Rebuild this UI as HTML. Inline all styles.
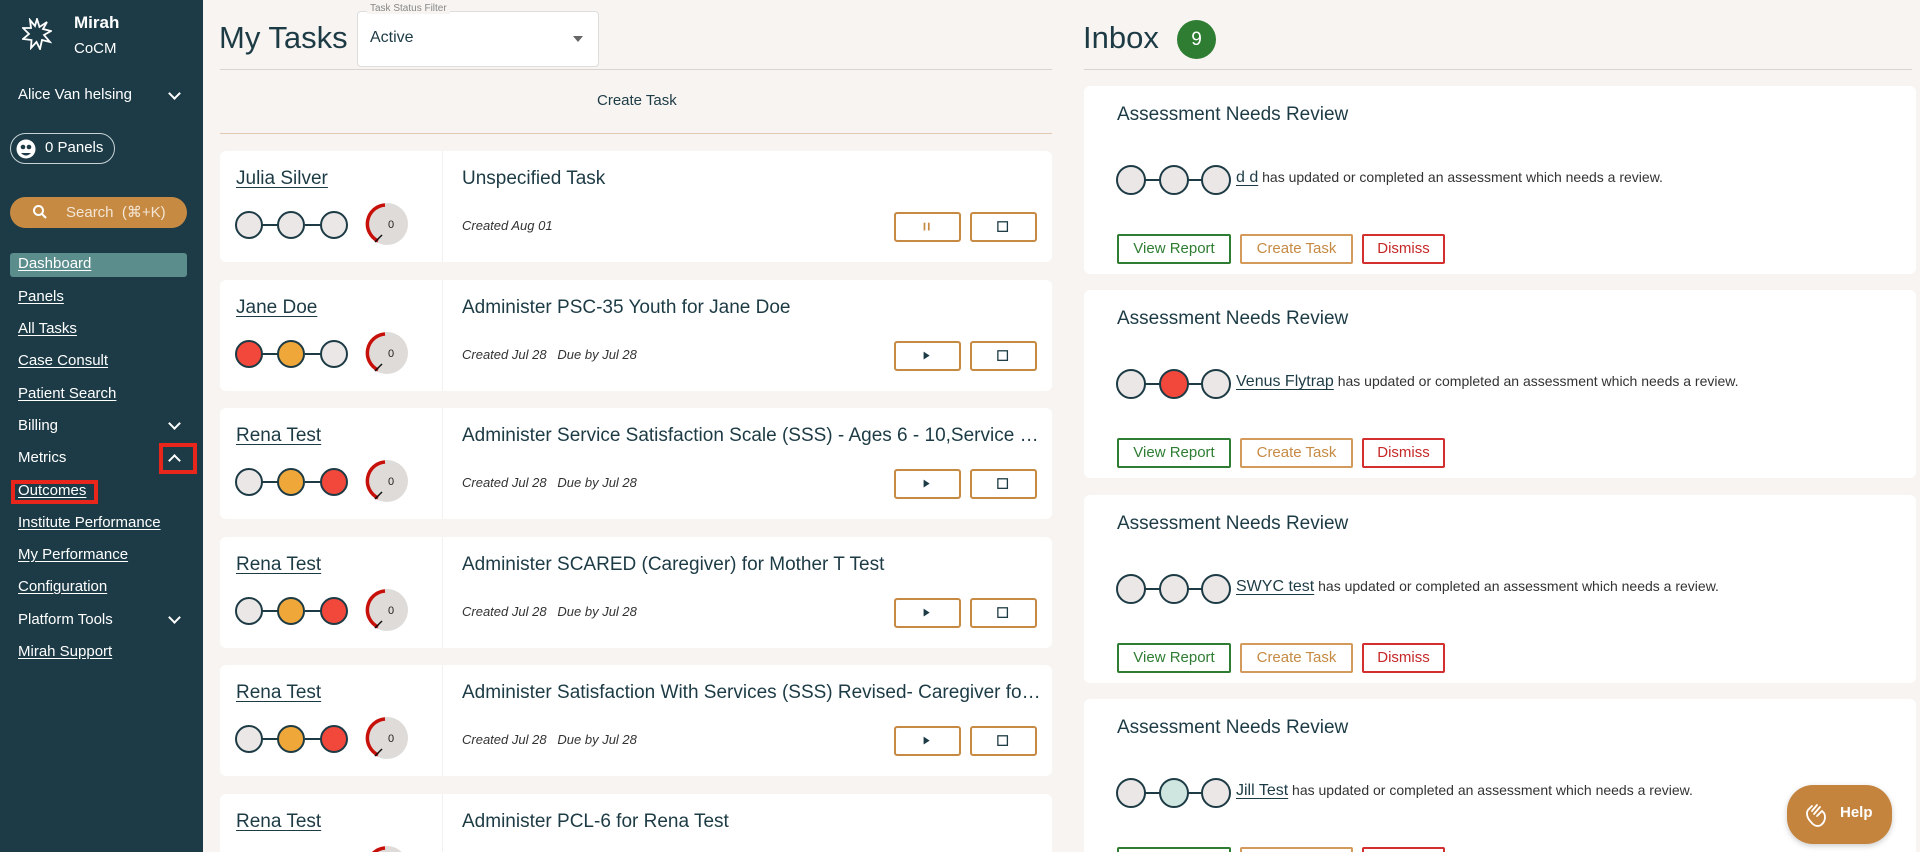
<!DOCTYPE html>
<html style="width:1920px;height:852px;overflow:hidden"><head><meta charset="utf-8"><style>
*{box-sizing:border-box;margin:0;padding:0}
body{width:1920px;height:852px;overflow:hidden;background:#f7f4f1;font-family:"Liberation Sans",sans-serif;color:#1d3b45}
#w{position:relative;width:1920px;height:852px;overflow:hidden}
.a{position:absolute}
#sb{left:0;top:0;width:203px;height:852px;background:#1c3b46;color:#fff}
.nav{position:absolute;left:18px;font-size:15px;color:#fff;text-decoration:underline;text-underline-offset:2px}
.nu{text-decoration:none}
.chev{position:absolute;left:170px;width:9px;height:9px;border-right:2px solid #fff;border-bottom:2px solid #fff;transform:rotate(45deg)}
.card{position:absolute;left:220px;width:832px;height:111px;background:#fff;border-radius:6px}
.card .nm{position:absolute;left:16px;top:17px;font-size:19px;text-decoration:underline;text-underline-offset:3px}
.card .ci{position:absolute;left:15px;top:59px}
.card .gg{position:absolute;left:145px;top:51px}
.card .tt{position:absolute;left:242px;top:17px;font-size:19px;white-space:nowrap;width:580px;overflow:hidden;text-overflow:ellipsis}
.card .cr{position:absolute;left:242px;top:67px;font-size:13px;font-style:italic;color:#333}
.card .vl{position:absolute;left:222px;top:0;width:1px;height:111px;background:#f3f1ef}
.btn{position:absolute;top:61px;width:67px;height:30px;border:2px solid #c68a43;border-radius:3px;background:#fff}
.ib{position:absolute;left:1084px;width:832px;height:188px;background:#fff;border-radius:6px}
.ib .h{position:absolute;left:33px;top:18px;font-size:19px}
.ib .ci{position:absolute;left:32px;top:77px}
.ib .tx{position:absolute;left:152px;top:83px;font-size:14px;color:#333}
.ib .tx u{font-size:16px;color:#1d3b45;text-underline-offset:3px}
.ob{position:absolute;top:148px;height:30px;border:2px solid;border-radius:2px;font-size:15px;text-align:center;line-height:26px}
</style></head><body><div id="w">
<div id="sb" class="a">
<svg class="a" style="left:22px;top:18px" width="30" height="32" viewBox="0 0 30 32"><path d="M15 1 L17.5 9 L25 4 L21 11 L29 13 L22 17 L28 24 L20 22 L18 31 L14.5 24 L9 30 L9.5 22 L1 21 L7 16 L1 10 L9 10 L8 2 L13 8 Z" fill="none" stroke="#fff" stroke-width="1.8"/></svg>
<div class="a" style="left:74px;top:13px;font-size:17px;font-weight:bold">Mirah</div>
<div class="a" style="left:74px;top:40px;font-size:15px">CoCM</div>
<div class="a" style="left:18px;top:86px;font-size:15px">Alice Van helsing</div>
<div class="chev" style="top:89px"></div>
<div class="a" style="left:10px;top:133px;width:105px;height:31px;border:1px solid #c9d3d6;border-radius:16px"></div>
<svg class="a" style="left:16px;top:139px" width="20" height="20"><circle cx="10" cy="10" r="9.5" fill="#fff"/><circle cx="7" cy="8" r="2.3" fill="#1c3b46"/><circle cx="13" cy="8" r="2.3" fill="#1c3b46"/><path d="M5 14 Q10 19 15 14" fill="#1c3b46"/></svg>
<div class="a" style="left:45px;top:139px;font-size:15px">0 Panels</div>
<div class="a" style="left:10px;top:197px;width:177px;height:31px;border-radius:16px;background:#c68a43"></div>
<svg class="a" style="left:32px;top:204px" width="16" height="16"><circle cx="6.5" cy="6.5" r="4.5" stroke="#fff" stroke-width="2" fill="none"/><path d="M10 10 L14 14" stroke="#fff" stroke-width="2"/></svg>
<div class="a" style="left:66px;top:203px;font-size:15px;color:#f4e6d4">Search &nbsp;(⌘+K)</div>
<div class="a" style="left:10px;top:253px;width:177px;height:24px;border-radius:3px;background:#5a8d8c"></div>
<div class="nav" style="top:255px">Dashboard</div>
<div class="nav" style="top:288px">Panels</div>
<div class="nav" style="top:320px">All Tasks</div>
<div class="nav" style="top:352px">Case Consult</div>
<div class="nav" style="top:385px">Patient Search</div>
<div class="nav nu" style="top:417px">Billing</div><div class="chev" style="top:419px"></div>
<div class="nav nu" style="top:449px">Metrics</div>
<div class="a" style="left:159px;top:443px;width:38px;height:31px;border:4px solid #e8261c"></div>
<div class="chev" style="top:456px;transform:rotate(-135deg)"></div>
<div class="a" style="left:11px;top:480px;width:87px;height:24px;border:4px solid #e8261c"></div>
<div class="nav" style="top:482px">Outcomes</div>
<div class="nav" style="top:514px">Institute Performance</div>
<div class="nav" style="top:546px">My Performance</div>
<div class="nav" style="top:578px">Configuration</div>
<div class="nav nu" style="top:611px">Platform Tools</div><div class="chev" style="top:613px"></div>
<div class="nav" style="top:643px">Mirah Support</div>
</div>

<div class="a" style="left:219px;top:20px;font-size:31px">My Tasks</div>
<div class="a" style="left:357px;top:11px;width:242px;height:56px;background:#fff;border:1px solid #ddd;border-radius:4px"></div>
<div class="a" style="left:367px;top:3px;font-size:10px;color:#888;background:#f7f4f1;padding:0 3px">Task Status Filter</div>
<div class="a" style="left:370px;top:29px;font-size:16px">Active</div>
<div class="a" style="left:573px;top:36px;border-left:5px solid transparent;border-right:5px solid transparent;border-top:6px solid #666"></div>
<div class="a" style="left:220px;top:69px;width:832px;height:1px;background:#d9d4cf"></div>
<div class="a" style="left:597px;top:92px;font-size:15px">Create Task</div>
<div class="a" style="left:220px;top:133px;width:832px;height:1px;background:#e2c9b4"></div>

<svg width="0" height="0" style="position:absolute"><defs>
<g id="g"><circle cx="22" cy="22" r="21" fill="#dedbd8"/><path d="M13 39 A19 19 0 0 1 20 3" stroke="#c8100a" stroke-width="3.5" fill="none"/><path d="M10 40 L17 33" stroke="#111" stroke-width="1.5"/><text x="23" y="26" font-size="11" font-family="Liberation Sans" fill="#222">0</text></g>
<g id="pause"><rect x="29" y="10" width="2" height="9" fill="#c68a43"/><rect x="34" y="10" width="2" height="9" fill="#c68a43"/></g>
<g id="play"><path d="M29 10 L36 14.5 L29 19Z" fill="#1d3b45"/></g>
<g id="stop"><rect x="27" y="9" width="11" height="11" fill="none" stroke="#1d3b45" stroke-width="1.5"/></g>
</defs></svg>

<div class="card" style="top:151px"><div class="vl"></div><div class="nm">Julia Silver</div>
<svg class="ci" width="120" height="32"><path d="M27 15H43M70 15H86" stroke="#1d3b45" stroke-width="2"/><circle cx="14" cy="15" r="13" fill="#ebe7e6" stroke="#1d3b45" stroke-width="2"/><circle cx="56" cy="15" r="13" fill="#ebe7e6" stroke="#1d3b45" stroke-width="2"/><circle cx="99" cy="15" r="13" fill="#ebe7e6" stroke="#1d3b45" stroke-width="2"/></svg><svg class="gg" width="44" height="44"><use href="#g"/></svg>
<div class="tt">Unspecified Task</div><div class="cr">Created Aug 01</div>
<svg class="btn" style="left:674px" viewBox="0 0 67 30"><use href="#pause"/></svg><svg class="btn" style="left:750px" viewBox="0 0 67 30"><use href="#stop"/></svg></div>

<div class="card" style="top:280px"><div class="vl"></div><div class="nm">Jane Doe</div>
<svg class="ci" width="120" height="32"><path d="M27 15H43M70 15H86" stroke="#1d3b45" stroke-width="2"/><circle cx="14" cy="15" r="13" fill="#f2473b" stroke="#1d3b45" stroke-width="2"/><circle cx="56" cy="15" r="13" fill="#f0a73a" stroke="#1d3b45" stroke-width="2"/><circle cx="99" cy="15" r="13" fill="#ebe7e6" stroke="#1d3b45" stroke-width="2"/></svg><svg class="gg" width="44" height="44"><use href="#g"/></svg>
<div class="tt">Administer PSC-35 Youth for Jane Doe</div><div class="cr">Created Jul 28 &nbsp; Due by Jul 28</div>
<svg class="btn" style="left:674px" viewBox="0 0 67 30"><use href="#play"/></svg><svg class="btn" style="left:750px" viewBox="0 0 67 30"><use href="#stop"/></svg></div>

<div class="card" style="top:408px"><div class="vl"></div><div class="nm">Rena Test</div>
<svg class="ci" width="120" height="32"><path d="M27 15H43M70 15H86" stroke="#1d3b45" stroke-width="2"/><circle cx="14" cy="15" r="13" fill="#ebe7e6" stroke="#1d3b45" stroke-width="2"/><circle cx="56" cy="15" r="13" fill="#f0a73a" stroke="#1d3b45" stroke-width="2"/><circle cx="99" cy="15" r="13" fill="#f2473b" stroke="#1d3b45" stroke-width="2"/></svg><svg class="gg" width="44" height="44"><use href="#g"/></svg>
<div class="tt">Administer Service Satisfaction Scale (SSS) - Ages 6 - 10,Service Satisfaction</div><div class="cr">Created Jul 28 &nbsp; Due by Jul 28</div>
<svg class="btn" style="left:674px" viewBox="0 0 67 30"><use href="#play"/></svg><svg class="btn" style="left:750px" viewBox="0 0 67 30"><use href="#stop"/></svg></div>

<div class="card" style="top:537px"><div class="vl"></div><div class="nm">Rena Test</div>
<svg class="ci" width="120" height="32"><path d="M27 15H43M70 15H86" stroke="#1d3b45" stroke-width="2"/><circle cx="14" cy="15" r="13" fill="#ebe7e6" stroke="#1d3b45" stroke-width="2"/><circle cx="56" cy="15" r="13" fill="#f0a73a" stroke="#1d3b45" stroke-width="2"/><circle cx="99" cy="15" r="13" fill="#f2473b" stroke="#1d3b45" stroke-width="2"/></svg><svg class="gg" width="44" height="44"><use href="#g"/></svg>
<div class="tt">Administer SCARED (Caregiver) for Mother T Test</div><div class="cr">Created Jul 28 &nbsp; Due by Jul 28</div>
<svg class="btn" style="left:674px" viewBox="0 0 67 30"><use href="#play"/></svg><svg class="btn" style="left:750px" viewBox="0 0 67 30"><use href="#stop"/></svg></div>

<div class="card" style="top:665px"><div class="vl"></div><div class="nm">Rena Test</div>
<svg class="ci" width="120" height="32"><path d="M27 15H43M70 15H86" stroke="#1d3b45" stroke-width="2"/><circle cx="14" cy="15" r="13" fill="#ebe7e6" stroke="#1d3b45" stroke-width="2"/><circle cx="56" cy="15" r="13" fill="#f0a73a" stroke="#1d3b45" stroke-width="2"/><circle cx="99" cy="15" r="13" fill="#f2473b" stroke="#1d3b45" stroke-width="2"/></svg><svg class="gg" width="44" height="44"><use href="#g"/></svg>
<div class="tt">Administer Satisfaction With Services (SSS) Revised- Caregiver for Mother</div><div class="cr">Created Jul 28 &nbsp; Due by Jul 28</div>
<svg class="btn" style="left:674px" viewBox="0 0 67 30"><use href="#play"/></svg><svg class="btn" style="left:750px" viewBox="0 0 67 30"><use href="#stop"/></svg></div>

<div class="card" style="top:794px"><div class="vl"></div><div class="nm">Rena Test</div>
<svg class="gg" width="44" height="44"><use href="#g"/></svg>
<div class="tt">Administer PCL-6 for Rena Test</div></div>

<div class="a" style="left:1083px;top:20px;font-size:31px">Inbox</div>
<div class="a" style="left:1177px;top:20px;width:39px;height:39px;border-radius:50%;background:#2e7d32;color:#fff;font-size:19px;text-align:center;line-height:39px">9</div>
<div class="a" style="left:1084px;top:69px;width:828px;height:1px;background:#d9d4cf"></div>

<div class="ib" style="top:86px"><div class="h">Assessment Needs Review</div>
<svg class="ci" width="116" height="34"><path d="M28 17H45M71 17H88" stroke="#1d3b45" stroke-width="2"/><circle cx="15" cy="17" r="14" fill="#ebe7e6" stroke="#1d3b45" stroke-width="2"/><circle cx="58" cy="17" r="14" fill="#ebe7e6" stroke="#1d3b45" stroke-width="2"/><circle cx="100" cy="17" r="14" fill="#ebe7e6" stroke="#1d3b45" stroke-width="2"/></svg>
<div class="tx"><u>d d</u> has updated or completed an assessment which needs a review.</div>
<div class="ob" style="left:33px;width:114px;border-color:#2e7d32;color:#2e7d32">View Report</div>
<div class="ob" style="left:156px;width:113px;border-color:#d39a5b;color:#c68a43">Create Task</div>
<div class="ob" style="left:278px;width:83px;border-color:#d32f2f;color:#c62828">Dismiss</div></div>

<div class="ib" style="top:290px"><div class="h">Assessment Needs Review</div>
<svg class="ci" width="116" height="34"><path d="M28 17H45M71 17H88" stroke="#1d3b45" stroke-width="2"/><circle cx="15" cy="17" r="14" fill="#ebe7e6" stroke="#1d3b45" stroke-width="2"/><circle cx="58" cy="17" r="14" fill="#f2473b" stroke="#1d3b45" stroke-width="2"/><circle cx="100" cy="17" r="14" fill="#ebe7e6" stroke="#1d3b45" stroke-width="2"/></svg>
<div class="tx"><u>Venus Flytrap</u> has updated or completed an assessment which needs a review.</div>
<div class="ob" style="left:33px;width:114px;border-color:#2e7d32;color:#2e7d32">View Report</div>
<div class="ob" style="left:156px;width:113px;border-color:#d39a5b;color:#c68a43">Create Task</div>
<div class="ob" style="left:278px;width:83px;border-color:#d32f2f;color:#c62828">Dismiss</div></div>

<div class="ib" style="top:495px"><div class="h">Assessment Needs Review</div>
<svg class="ci" width="116" height="34"><path d="M28 17H45M71 17H88" stroke="#1d3b45" stroke-width="2"/><circle cx="15" cy="17" r="14" fill="#ebe7e6" stroke="#1d3b45" stroke-width="2"/><circle cx="58" cy="17" r="14" fill="#ebe7e6" stroke="#1d3b45" stroke-width="2"/><circle cx="100" cy="17" r="14" fill="#ebe7e6" stroke="#1d3b45" stroke-width="2"/></svg>
<div class="tx"><u>SWYC test</u> has updated or completed an assessment which needs a review.</div>
<div class="ob" style="left:33px;width:114px;border-color:#2e7d32;color:#2e7d32">View Report</div>
<div class="ob" style="left:156px;width:113px;border-color:#d39a5b;color:#c68a43">Create Task</div>
<div class="ob" style="left:278px;width:83px;border-color:#d32f2f;color:#c62828">Dismiss</div></div>

<div class="ib" style="top:699px;height:160px"><div class="h">Assessment Needs Review</div>
<svg class="ci" width="116" height="34"><path d="M28 17H45M71 17H88" stroke="#1d3b45" stroke-width="2"/><circle cx="15" cy="17" r="14" fill="#ebe7e6" stroke="#1d3b45" stroke-width="2"/><circle cx="58" cy="17" r="14" fill="#cfe6e0" stroke="#1d3b45" stroke-width="2"/><circle cx="100" cy="17" r="14" fill="#ebe7e6" stroke="#1d3b45" stroke-width="2"/></svg>
<div class="tx"><u>Jill Test</u> has updated or completed an assessment which needs a review.</div>
<div class="ob" style="left:33px;width:114px;border-color:#2e7d32;color:#2e7d32">View Report</div>
<div class="ob" style="left:156px;width:113px;border-color:#d39a5b;color:#c68a43">Create Task</div>
<div class="ob" style="left:278px;width:83px;border-color:#d32f2f;color:#c62828">Dismiss</div></div>

<div class="a" style="left:1787px;top:785px;width:105px;height:59px;border-radius:26px;background:#c5843e;box-shadow:0 2px 6px rgba(0,0,0,.2)"></div>
<svg class="a" style="left:1803px;top:800px" width="30" height="30" viewBox="0 0 30 30"><path d="M8 22 C4 18 3 13 5 10 L9 6 M9 11 L14 5 M11 14 L17 7 M14 16 L19 11 L21 13 C23 17 22 22 18 25 C15 27 11 26 8 22" fill="none" stroke="#fff" stroke-width="1.8" stroke-linecap="round"/></svg>
<div class="a" style="left:1840px;top:804px;font-size:15px;font-weight:bold;color:#fff">Help</div>
</div></body></html>
